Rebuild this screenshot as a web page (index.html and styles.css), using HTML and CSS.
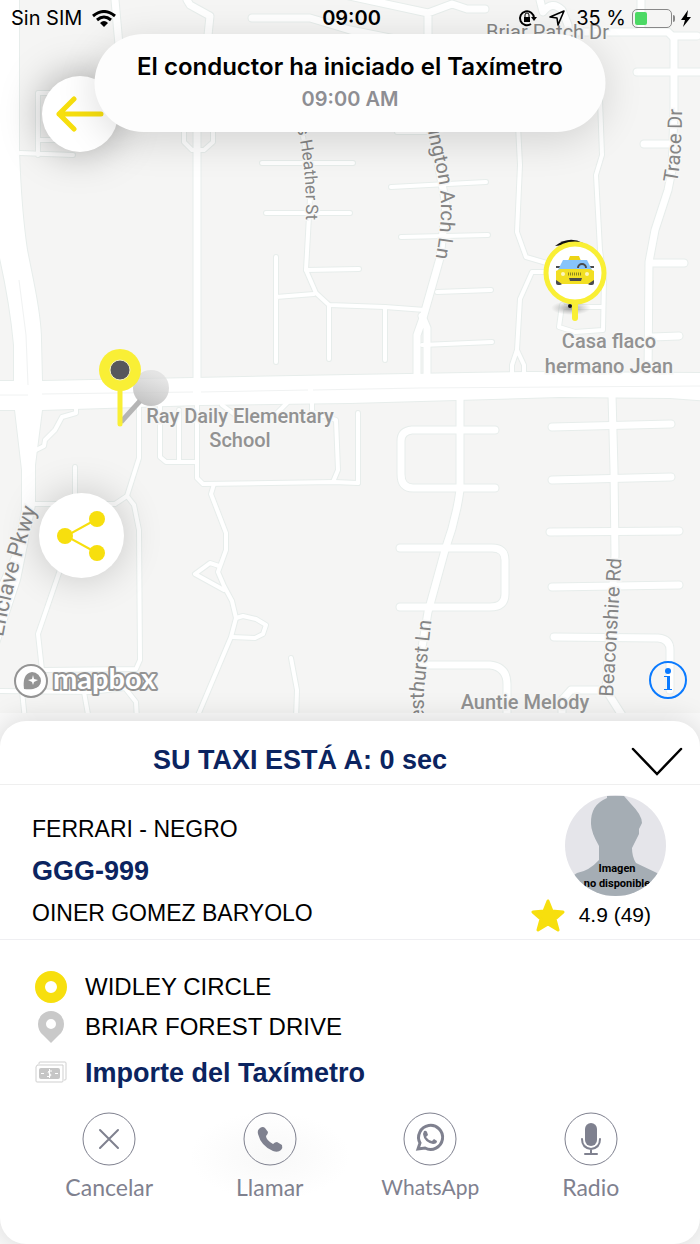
FILE: index.html
```html
<!DOCTYPE html>
<html lang="es">
<head>
  <meta charset="UTF-8" />
  <meta name="viewport" content="width=device-width, initial-scale=1" />
  <title>Su taxi</title>
  <link rel="stylesheet" href="styles.css">
</head>
<body>

  <!-- Map -->
  <section class="map">
    <svg class="map-canvas" viewBox="0 0 700 713">
      <defs>
        <g id="roads-small">
          <path d="M38 155V93H58M40 140H60M20 153L73 155" />
          <path d="M184 128V142L192 150H204L213 142V128" />
          <path d="M262 163H353M266 213H350M300 120L311 180L306 270L316 293L329 305L385 307L425 310" />
          <path d="M276 257V362M276 297L314 294M306 270L359 269M329 305V359M385 307V360" />
          <path d="M391 187L486 182M401 237L488 235M397 132H432M437 292L491 290M422 345L492 342" />
          <path d="M518 125L520 165L517 232L526 257L550 264M550 272H532L520 299L517 350L512 365V378M517 350L524 365V378" />
          <path d="M600 100L602 155L596 175L600 250L604 280L603 330L575 332L559 327L562 305M565 307H603" />
          <path d="M76 405V413L62 417L55 430L45 440L44 446L34 451M75 467V504M35 504H115L127 496L139 458V400" />
          <path d="M127 496L134 505L139 530L140 660L136 669L44 670M60 570L38 634L42 670" />
          <path d="M0 691L90 692L125 688L136 702L137 720M22 691L25 720M84 692L89 720" />
          <path d="M160 405V457L166 462H197M179 410V462M197 400V478L203 484L334 482L358 483" />
          <path d="M222 405L238 417M288 402L275 415M312 402V412L336 420L338 470L333 482M358 413V483" />
          <path d="M214 484L211 494L226 533V550L218 572L224 586L232 601L236 618L231 637L196 720" />
          <path d="M219 566L210 563L195 574L224 590M236 618L243 616L256 619L266 625L263 634L255 638L232 637" />
          <path d="M291 658L297 690L296 720" />
        </g>
        <g id="roads-mid">
          <path d="M115 0L119 45M187 0L190 5L210 16L207 45L197 130V380" />
          <path d="M252 18H310L350 30L400 40M340 -6L428 13L452 4L467 9H485M428 13V45M540 0L543 12Q552 0 562 10L568 25V40" />
          <path d="M641 0V32M555 32H668L674 38M637 72H700M674 36H697M644 144H674M652 263H684M652 337L679 336" />
          <path d="M674 38V110L672 170L668 190L655 230L649 262L648 378" />
          <path d="M431 125L446 205L440 258L423 318L417 335V380M422 316L427 328V380" />
          <path d="M460 396V490Q456 520 445 550L428 612L419 665V720" />
          <path d="M495 430H412Q401 431 401 441V474Q401 488 413 488H495" />
          <path d="M400 548H492Q505 548 505 560V594Q505 607 490 607H400" />
          <path d="M420 665H490Q507 667 507 684V720" />
          <path d="M612 395L614 470L615 555L606 690L625 720" />
          <path d="M552 427L671 424M552 480L671 477M550 532L679 531M552 587L679 585" />
          <path d="M554 637L658 638Q670 639 670 650V690M562 720V700L571 690H606" />
        </g>
        <g id="roads-wide">
          <path d="M-8 -8H19V150Q21 210 27 250L33 280Q41 320 41 340L42 381L350 375L530 372L710 373V401L670 398L560 397L350 403L200 405L42 410L35 465V505L20 580L-8 665V600L15 550L22 510V470L15 410H-8V381H14V345Q9 290 -8 225Z" />
        </g>

        <path id="line-heather" d="M297 128Q307 165 306 226" />
        <path id="line-arch" d="M428 131C432 155 441 178 441 205C441 230 438 245 434 268" />
        <path id="line-trace" d="M677 183Q682 160 682 100" />
        <path id="line-beacon" d="M613 697L622 550" />
        <path id="line-westhurst" d="M424 720V690L433 605" />
        <path id="line-enclave" d="M3 637Q15 570 43 490" />
        <radialGradient id="shade">
          <stop offset="0" stop-color="#777" stop-opacity=".75" />
          <stop offset="1" stop-color="#999" stop-opacity="0" />
        </radialGradient>
        <linearGradient id="pin-shade" x1="0" y1="1" x2=".4" y2="0">
          <stop offset="0" stop-color="#bbb" />
          <stop offset="1" stop-color="#ddd" stop-opacity=".7" />
        </linearGradient>
      </defs>

      <use href="#roads-small" class="casing casing-small" />
      <use href="#roads-mid" class="casing casing-mid" />
      <use href="#roads-wide" class="casing casing-wide" />
      <use href="#roads-small" class="road road-small" />
      <use href="#roads-mid" class="road road-mid" />
      <use href="#roads-wide" class="road-wide" />
      <path class="median" d="M0 395H28M42 394L193 392M201 392L308 390M313 390L420 388L700 386M19 280L26 335L28 385" />

      <g class="street">
        <text x="486" y="39">Briar Patch Dr</text>
        <text class="street-small"><textPath href="#line-heather">s Heather St</textPath></text>
        <text><textPath href="#line-arch">ington Arch Ln</textPath></text>
        <text><textPath href="#line-trace">Trace Dr</textPath></text>
        <text><textPath href="#line-beacon">Beaconshire Rd</textPath></text>
        <text><textPath href="#line-westhurst">esthurst Ln</textPath></text>
        <text class="street-large"><textPath href="#line-enclave">Enclave Pkwy</textPath></text>
      </g>
      <g class="place">
        <text x="240" y="423">Ray Daily Elementary</text>
        <text x="240" y="447">School</text>
        <text x="609" y="348">Casa flaco</text>
        <text x="609" y="373">hermano Jean</text>
        <text x="525" y="709">Auntie Melody</text>
      </g>

      <!-- Pickup pin -->
      <circle cx="151" cy="388" r="18" fill="url(#pin-shade)" />
      <path d="M121 422L140 401" stroke="#b5b5b5" stroke-width="5" />
      <path d="M120 386V424" stroke="#f9ef35" stroke-width="5" stroke-linecap="round" />
      <circle cx="120" cy="370" r="21" fill="#f9ef35" />
      <circle cx="120" cy="370" r="10" fill="#57575c" stroke="#f4f0c0" stroke-width="1" />

      <!-- Taxi pin -->
      <ellipse cx="571" cy="308" rx="20" ry="7" fill="url(#shade)" />
      <path d="M555 246Q569 235 583 243Z" fill="#111" />
      <circle cx="570" cy="306" r="2" fill="#111" />
      <path d="M575 304V318" stroke="#f9ef35" stroke-width="6" stroke-linecap="round" />
      <circle cx="575" cy="273" r="29" fill="#fff" stroke="#f9ef35" stroke-width="5" />
      <rect x="556" y="275" width="6" height="10" rx="2" fill="#4a4a4c" />
      <rect x="588" y="275" width="6" height="10" rx="2" fill="#4a4a4c" />
      <path d="M570 256H579L581 261H568Z" fill="#ecd416" />
      <path d="M556 266H561V268H556ZM589 266H594V268H589Z" fill="#4a4a4c" />
      <path d="M563 260H587L592 270H558Z" fill="#87c4fb" />
      <path d="M560 269H590L594 271V280L588 284H562L556 280V271Z" fill="#f2df23" />
      <path d="M578 268A4 4 0 0 1 586 268" fill="none" stroke="#4a4a4c" stroke-width="2" />
      <path d="M568 274H582" stroke="#8c8420" stroke-width="3" stroke-dasharray="1 1" />
      <path d="M569 278H582L581 281H570Z" fill="#4a4a4c" />
      <circle cx="563" cy="274" r="2" fill="#fdf6c0" />
      <circle cx="587" cy="274" r="2" fill="#fdf6c0" />

      <!-- Attribution logo -->
      <circle cx="31" cy="681" r="16" fill="#fff" fill-opacity=".9" stroke="#949494" stroke-width="2" />
      <path d="M24 689C23 681 24 673 32 672A9 9 0 0 1 41 681C40 689 32 690 24 689Z" fill="#949494" />
      <path d="M33 675L34 679L38 680L34 682L33 685L32 682L28 680L32 679Z" fill="#fff" />
      <text class="logo-text" x="53" y="689">mapbox</text>
    </svg>

    <header class="status">
      <div class="status-side">
        <span>Sin SIM</span>
        <svg width="24" height="17" viewBox="0 0 24 17" fill="none" stroke="#000" stroke-width="3">
          <path d="M1 6Q12 -3 23 6M5 10Q12 4 19 10" />
          <path d="M8 13Q12 9 16 13L12 17Z" fill="#000" stroke="none" />
        </svg>
      </div>
      <time class="clock">09:00</time>
      <div class="status-side status-right">
        <svg width="20" height="18" viewBox="0 0 20 18" fill="none" stroke="#000" stroke-width="2">
          <path d="M13 15A7 7 0 1 1 16 9" />
          <path d="M13 8H19L16 12Z" fill="#000" stroke="none" />
          <rect x="6" y="8" width="6" height="5" fill="#000" stroke="none" />
          <path d="M7 8V6A2 2 0 0 1 11 6V8" stroke-width="1" />
        </svg>
        <svg class="status-arrow" width="16" height="16" viewBox="0 0 16 16" fill="none" stroke="#000" stroke-width="1.600" stroke-linejoin="round">
          <path d="M15 1L9 15L8 8L1 7Z" />
        </svg>
        <span>35 %</span>
        <span class="battery"><span class="battery-level"></span></span>
        <svg width="12" height="17" viewBox="0 0 12 17"><path d="M8 0L1 10H5L3 17L11 7H7Z" /></svg>
      </div>
    </header>

    <button class="round back" aria-label="Volver">
      <svg width="48" height="36" viewBox="0 0 48 36" fill="none" stroke="#f7df0e" stroke-width="5" stroke-linecap="round" stroke-linejoin="round">
        <path d="M18 3L3 18L18 33M3 18H45" />
      </svg>
    </button>

    <div class="toast" role="status">
      <strong>El conductor ha iniciado el Taxímetro</strong>
      <time>09:00 AM</time>
    </div>

    <button class="round share" aria-label="Compartir">
      <svg width="50" height="50" viewBox="0 0 50 50" fill="#f7df0e">
        <path d="M40 8L9 25L40 42" fill="none" stroke="#f7df0e" stroke-width="2" />
        <circle cx="40" cy="8" r="8" /><circle cx="8" cy="25" r="8" /><circle cx="40" cy="42" r="8" />
      </svg>
    </button>

    <button class="info" aria-label="Información">
      <svg width="38" height="38" viewBox="0 0 38 38" fill="#0a7aff">
        <circle cx="19" cy="19" r="18" fill="none" stroke="#0a7aff" stroke-width="2" />
        <circle cx="19" cy="10" r="3" />
        <path d="M15 15H21V28H23V29H15V28H18V16H15Z" />
      </svg>
    </button>
  </section>

  <!-- Trip details -->
  <main class="sheet">
    <header class="sheet-header">
      <h1>SU TAXI ESTÁ A: 0 sec</h1>
      <button class="collapse" aria-label="Ocultar">
        <svg width="52" height="30" viewBox="0 0 52 30" fill="none" stroke="#000" stroke-width="2.500" stroke-linecap="round">
          <path d="M2 3L26 28L50 3" />
        </svg>
      </button>
    </header>

    <section class="driver">
      <div class="driver-data">
        <p>FERRARI - NEGRO</p>
        <p class="plate">GGG-999</p>
        <p>OINER GOMEZ BARYOLO</p>
      </div>
      <div class="driver-side">
        <svg class="avatar" viewBox="0 0 101 101">
          <rect width="101" height="101" fill="#e5e5ea" />
          <path d="M42 1H59L66 9Q77 20 77 28L74 34V39L67 53Q67 62 71 68L92 78L101 90V101H0V86L12 78Q24 76 34 65V51Q26 37 26 29Q25 10 42 3Z" fill="#a5adb4" />
          <text x="52" y="77">Imagen</text>
          <text x="52" y="92">no disponible</text>
        </svg>
        <p class="rating">
          <svg width="34" height="33" viewBox="0 0 34 33" fill="#f7df0e" stroke="#f7df0e" stroke-width="3" stroke-linejoin="round">
            <path d="M17 2L21 12L32 13L24 20L27 31L17 25L7 31L10 20L2 13L13 12Z" />
          </svg>
          <span>4.9 (49)</span>
        </p>
      </div>
    </section>

    <ul class="route">
      <li>
        <svg width="32" height="32" viewBox="0 0 32 32"><circle cx="16" cy="16" r="11" fill="none" stroke="#f7df0e" stroke-width="10" /></svg>
        <span>WIDLEY CIRCLE</span>
      </li>
      <li>
        <svg width="32" height="32" viewBox="0 0 32 32"><path fill="#c9c9c9" fill-rule="evenodd" d="M16 0A13 13 0 0 1 29 13Q29 20 24 24L16 32L8 24Q3 20 3 13A13 13 0 0 1 16 0ZM16 8A5 5 0 1 0 16 18A5 5 0 1 0 16 8Z" /></svg>
        <span>BRIAR FOREST DRIVE</span>
      </li>
      <li class="fare">
        <svg width="32" height="24" viewBox="0 0 32 24" fill="none" stroke="#cfcfcf">
          <path d="M4 3V2Q4 1 5 1H30Q31 1 31 2V18Q31 19 30 19H29M2 5Q1 5 1 6V20Q1 21 2 21H27Q28 21 28 20V4H2V5" />
          <rect x="4" y="7" width="21" height="11" rx="2" fill="#c6c6c6" stroke="none" />
          <path d="M6 12.500H9M20 12.500H23M17 10H14Q12 11 14 12.500H15Q17 14 15 15.500H12M14.500 8V17" stroke="#fff" />
        </svg>
        <strong>Importe del Taxímetro</strong>
      </li>
    </ul>

    <nav class="actions">
      <button class="action">
        <svg viewBox="0 0 54 54">
          <circle cx="27" cy="27" r="26" />
          <path d="M18 18L36 36M36 18L18 36" stroke-width="2" stroke-linecap="round" />
        </svg>
        <span>Cancelar</span>
      </button>
      <button class="action call">
        <svg viewBox="0 0 54 54">
          <circle cx="27" cy="27" r="26" />
          <path class="solid" d="M17 16Q20 14 22 16L25 20Q25 22 23 24Q23 28 30 32Q32 30 34 30L39 33Q40 36 38 38Q35 41 30 39Q18 34 15 22Q14 18 17 16Z" />
        </svg>
        <span>Llamar</span>
      </button>
      <button class="action">
        <svg viewBox="0 0 54 54">
          <circle cx="27" cy="27" r="26" />
          <path d="M15 37L17 31A12 12 0 1 1 22 36Z" stroke-width="3" />
          <path class="solid" d="M21 19Q23 18 24 20L25 23L23 25Q25 28 29 29L31 27L34 29Q34 32 30 32Q21 30 20 22Z" />
        </svg>
        <span class="label-small">WhatsApp</span>
      </button>
      <button class="action">
        <svg viewBox="0 0 54 54">
          <circle cx="27" cy="27" r="26" />
          <rect class="solid" x="21" y="11" width="12" height="23" rx="6" />
          <path d="M18 27Q18 36 27 37Q36 36 36 27M27 37V41M21 42H33" stroke-width="2" stroke-linecap="round" />
        </svg>
        <span>Radio</span>
      </button>
    </nav>
  </main>

</body>
</html>
```

FILE: styles.css
```css
* {
  box-sizing: border-box;
}
body {
  margin: 0;
  min-height: 100vh;
  display: flex;
  flex-direction: column;
  background: #fafafa;
  color: #000;
  font-family: "Liberation Sans", Arial, sans-serif;
}
h1, p, ul {
  margin: 0;
  padding: 0;
}
button {
  padding: 0;
  border: none;
  background: none;
  font: inherit;
  cursor: pointer;
}
svg {
  display: block;
  flex: none;
}

/* Map */
.map {
  position: relative;
  margin-bottom: 8px;
  background: #f5f5f4;
}
.map-canvas {
  width: 100%;
  height: auto;
}
.casing, .road {
  fill: none;
  stroke-linecap: round;
  stroke-linejoin: round;
}
.casing {
  stroke: #e7edeb;
}
.road {
  stroke: #fff;
}
.casing-small {
  stroke-width: 6px;
}
.casing-mid {
  stroke-width: 9px;
}
.casing-wide {
  stroke-width: 2px;
}
.road-small {
  stroke-width: 4px;
}
.road-mid {
  stroke-width: 7px;
}
.road-wide {
  fill: #fff;
}
.median {
  fill: none;
  stroke: #f0f2f2;
}
.street, .place {
  font-family: Roboto, sans-serif;
  font-size: 20px;
  stroke: #f7f7f6;
  stroke-width: 3px;
  paint-order: stroke;
}
.street {
  fill: #858585;
}
.street-small {
  font-size: 17px;
}
.street-large {
  font-size: 22px;
}
.place {
  fill: #929292;
  font-weight: 500;
  text-anchor: middle;
}
.logo-text {
  font-family: Lato, sans-serif;
  font-size: 29px;
  font-weight: bold;
  fill: #fff;
  stroke: #949494;
  stroke-width: 4px;
  stroke-linejoin: round;
  paint-order: stroke;
}

/* Status bar */
.status {
  position: absolute;
  top: 0;
  left: 0;
  right: 0;
  display: grid;
  grid-template-columns: 1fr auto 1fr;
  align-items: center;
  height: 36px;
  padding: 0 8px 0 11px;
  font-family: Inter, sans-serif;
  font-size: 20px;
}
.status-side {
  display: flex;
  align-items: center;
  gap: 10px;
}
.status-right {
  justify-content: flex-end;
  gap: 6px;
}
.status-arrow {
  margin: 0 5px;
}
.clock {
  font-weight: 600;
}
.battery {
  position: relative;
  width: 40px;
  height: 19px;
  margin-right: 2px;
  padding: 2px;
  border: 1px solid #888;
  border-radius: 5px;
}
.battery::after {
  content: "";
  position: absolute;
  top: 5px;
  right: -4px;
  width: 2px;
  height: 7px;
  border-radius: 0 2px 2px 0;
  background: #888;
}
.battery-level {
  display: block;
  width: 35%;
  height: 100%;
  border-radius: 2px;
  background: #4cd964;
}

/* Map overlays */
.toast {
  position: absolute;
  top: 34px;
  left: 50%;
  width: 73%;
  transform: translateX(-50%);
  display: flex;
  flex-direction: column;
  align-items: center;
  justify-content: center;
  gap: 4px;
  min-height: 98px;
  border-radius: 49px;
  background: #fdfdfd;
  box-shadow: 0 8px 40px rgba(0,0,0,0.14);
  font-family: Inter, sans-serif;
  font-size: 24px;
  line-height: 28px;
}
.toast strong {
  font-weight: 600;
}
.toast time {
  color: #8e8e93;
  font-size: 20px;
  font-weight: 600;
}
.round {
  position: absolute;
  display: flex;
  align-items: center;
  justify-content: center;
  border-radius: 50%;
  background: #fff;
}
.back {
  top: 76px;
  left: 42px;
  width: 76px;
  height: 76px;
  box-shadow: 0 0 40px rgba(0,0,0,0.35);
}
.share {
  top: 493px;
  left: 39px;
  width: 85px;
  height: 85px;
  box-shadow: 0 0 40px rgba(0,0,0,0.2);
}
.info {
  position: absolute;
  right: 13px;
  bottom: 14px;
}

/* Trip details */
.sheet {
  position: relative;
  flex: 1;
  border-radius: 26px;
  background: #fff;
  box-shadow: 0 0 30px rgba(0,0,0,0.15);
}
.sheet-header {
  display: flex;
  align-items: center;
  height: 64px;
  padding-top: 16px;
  border-bottom: 1px solid #efefef;
}
.sheet-header h1 {
  flex: 1;
  color: #0b2460;
  font-size: 27px;
  text-align: center;
}
.collapse {
  display: flex;
  justify-content: flex-end;
  width: 100px;
  padding-right: 17px;
}
.driver {
  display: flex;
  justify-content: space-between;
  padding: 0 34px 5px 32px;
  border-bottom: 1px solid #efeff2;
}
.driver-data {
  padding-top: 23px;
  font-size: 23px;
  line-height: 42px;
}
.plate {
  color: #0b2460;
  font-size: 27px;
  font-weight: bold;
}
.driver-side {
  display: flex;
  flex-direction: column;
  align-items: flex-end;
  padding-top: 10px;
}
.avatar {
  width: 101px;
  height: 101px;
  border-radius: 50%;
}
.avatar text {
  font-family: Roboto, sans-serif;
  font-size: 11px;
  font-weight: bold;
  text-anchor: middle;
}
.rating {
  display: flex;
  align-items: center;
  gap: 14px;
  height: 38px;
  padding-right: 15px;
  font-size: 21px;
}
.route {
  padding: 27px 35px 0;
  list-style: none;
  font-size: 24px;
}
.route li {
  display: flex;
  align-items: center;
  gap: 18px;
  height: 40px;
}
.route .fare {
  height: 52px;
  color: #0b2460;
  font-size: 27px;
}
.actions {
  display: grid;
  grid-template-columns: repeat(4, 1fr);
  padding: 13px 29px 40px;
}
.action {
  display: flex;
  flex-direction: column;
  align-items: center;
  gap: 8px;
  color: #7f818f;
  font-family: Lato, sans-serif;
  font-size: 23px;
  line-height: 26px;
}
.action svg {
  width: 54px;
  height: 54px;
  overflow: visible;
  fill: none;
  stroke: #7f818f;
}
.action .solid {
  fill: #7f818f;
  stroke: none;
}
.label-small {
  font-size: 21px;
}
.call {
  background: radial-gradient(closest-side, #f8f8f8, #fff);
}
```
